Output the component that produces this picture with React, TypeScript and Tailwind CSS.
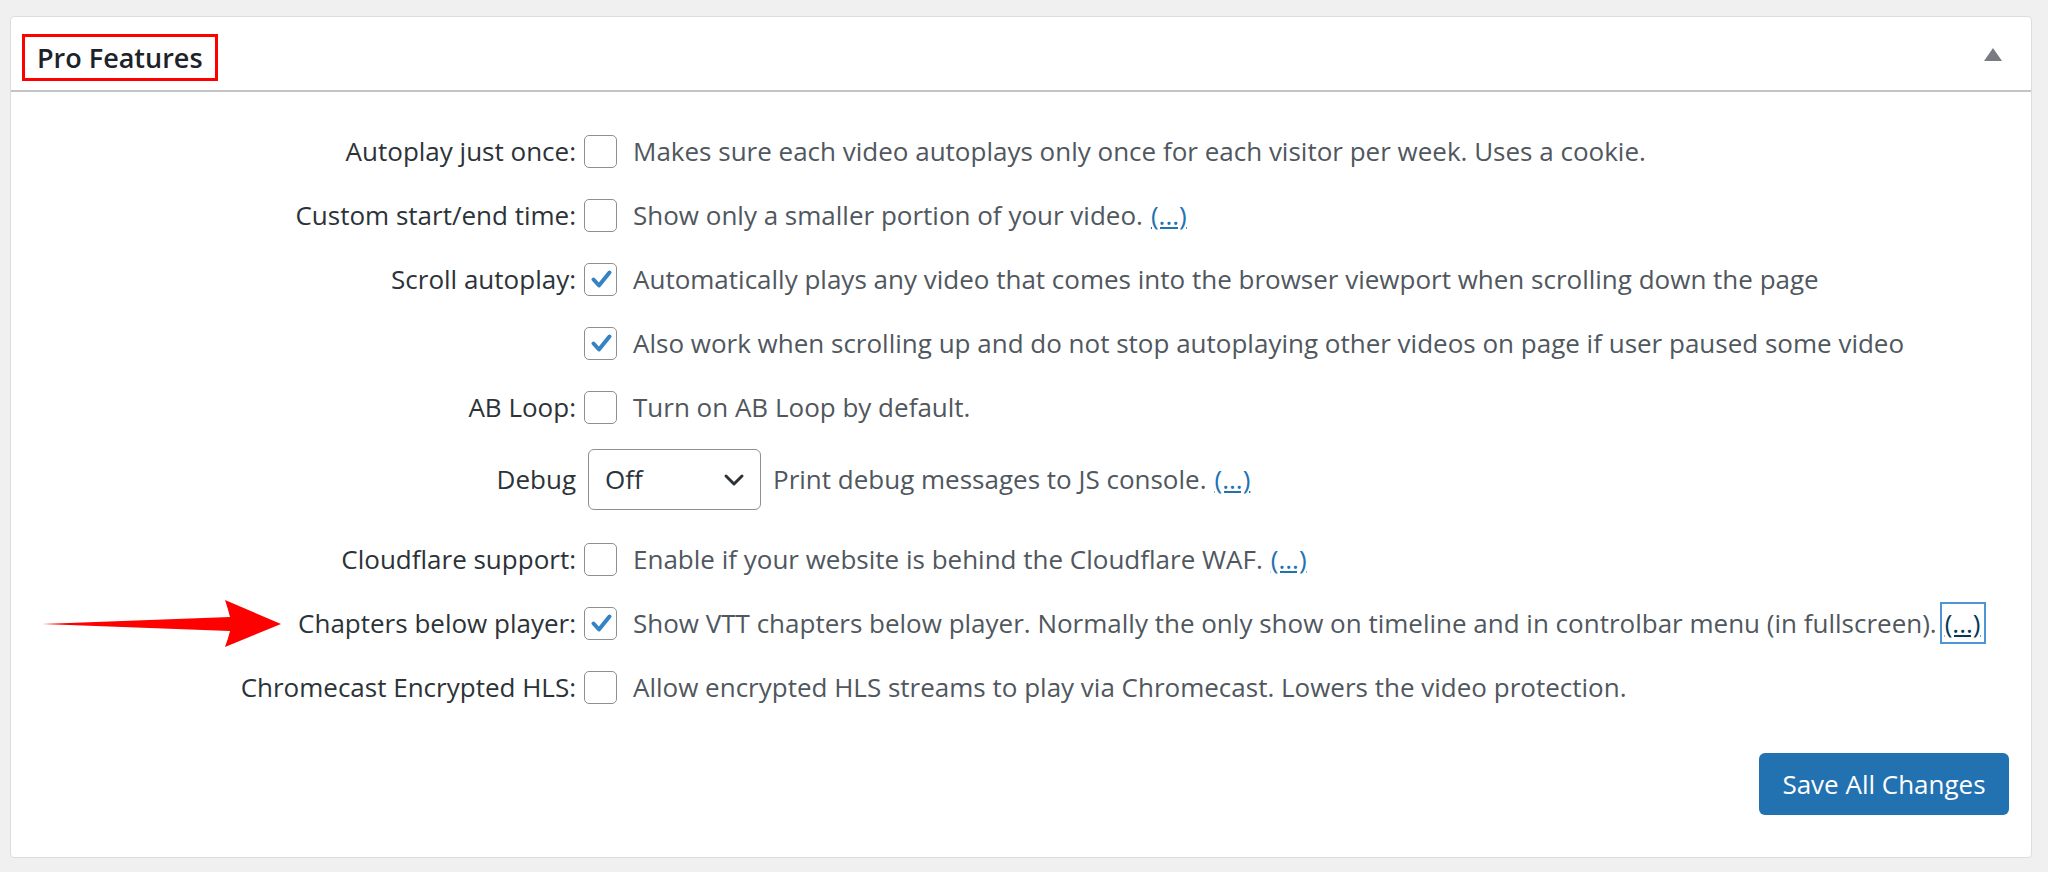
import React from "react"

type Row = {
  label: string
  checked?: boolean
  text: string
  link?: boolean
  focused?: boolean
}

const rowsTop: Row[] = [
  { label: "Autoplay just once:", text: "Makes sure each video autoplays only once for each visitor per week. Uses a cookie." },
  { label: "Custom start/end time:", text: "Show only a smaller portion of your video.", link: true },
  { label: "Scroll autoplay:", checked: true, text: "Automatically plays any video that comes into the browser viewport when scrolling down the page" },
  { label: "", checked: true, text: "Also work when scrolling up and do not stop autoplaying other videos on page if user paused some video" },
  { label: "AB Loop:", text: "Turn on AB Loop by default." },
]

const rowsBottom: Row[] = [
  { label: "Cloudflare support:", text: "Enable if your website is behind the Cloudflare WAF.", link: true },
  {
    label: "Chapters below player:",
    checked: true,
    text: "Show VTT chapters below player. Normally the only show on timeline and in controlbar menu (in fullscreen).",
    link: true,
    focused: true,
  },
  { label: "Chromecast Encrypted HLS:", text: "Allow encrypted HLS streams to play via Chromecast. Lowers the video protection." },
]

function Checkbox({ checked }: { checked?: boolean }) {
  return (
    <span className="flex h-[33px] w-[33px] shrink-0 items-center justify-center rounded-[5px] border-[1.5px] border-[#8c8f94] bg-white">
      {checked && (
        <svg width="26" height="26" viewBox="0 0 26 26">
          <path d="M5.5 13.5 L11 19.5 L21.5 6.5" fill="none" stroke="#3582c4" strokeWidth="4" strokeLinecap="round" strokeLinejoin="round" />
        </svg>
      )}
    </span>
  )
}

function MoreLink({ focused }: { focused?: boolean }) {
  if (focused) {
    return (
      <a href="#" className="ml-[6px] px-[2px] text-[#043959] underline outline outline-[2px] outline-offset-[1px] outline-[#4f94d4]">
        (...)
      </a>
    )
  }
  return (
    <a href="#" className="ml-[8px] text-[#2271b1] underline">
      (...)
    </a>
  )
}

function OptionRow({ row }: { row: Row }) {
  return (
    <div className="flex h-[64px] items-center">
      <div className="w-[565px] shrink-0 text-right text-[#2c3338]">{row.label}</div>
      <div className="ml-[8px]">
        <Checkbox checked={row.checked} />
      </div>
      <div className="ml-[16px] whitespace-nowrap text-[#50575e]">
        {row.text}
        {row.link && <MoreLink focused={row.focused} />}
      </div>
    </div>
  )
}

export default function App() {
  return (
    <div className="min-h-screen bg-[#f0f0f1] pl-[10px] pr-[16px] pt-[16px]" style={{ fontFamily: '"Open Sans", "Noto Sans", sans-serif' }}>
      <div className="relative h-[842px] rounded-[4px] border border-[#dcdcde] bg-white">
        {/* header */}
        <div className="flex h-[75px] items-start justify-between border-b-[2px] border-[#c3c4c7] pl-[11px] pr-[29px] pt-[17px]">
          <div className="flex h-[47px] items-center border-[3px] border-[#ff0000] px-[12px]">
            <h2 className="text-[27px] font-semibold leading-none text-[#1d2327]">Pro Features</h2>
          </div>
          <svg width="18" height="13" viewBox="0 0 18 13" className="mt-[14px]">
            <polygon points="9,0 18,13 0,13" fill="#787c82" />
          </svg>
        </div>

        {/* options */}
        <div className="pt-[27px] text-[26px]">
          {rowsTop.map((r, i) => (
            <OptionRow key={i} row={r} />
          ))}

          <div className="flex h-[88px] items-start pt-[10px]">
            <div className="flex h-[61px] w-[565px] shrink-0 items-center justify-end text-[#2c3338]">Debug</div>
            <div className="ml-[12px] flex h-[61px] w-[173px] items-center justify-between rounded-[6px] border-[1.5px] border-[#8c8f94] pl-[16px] pr-[15px] text-[26px] text-[#2c3338]">
              <span>Off</span>
              <svg width="22" height="14" viewBox="0 0 22 14">
                <path d="M3 3 L11 11 L19 3" fill="none" stroke="#2c3338" strokeWidth="3" strokeLinecap="round" strokeLinejoin="round" />
              </svg>
            </div>
            <div className="ml-[12px] flex h-[61px] items-center whitespace-nowrap text-[#50575e]">
              Print debug messages to JS console.
              <MoreLink />
            </div>
          </div>

          {rowsBottom.map((r, i) => (
            <OptionRow key={i} row={r} />
          ))}
        </div>

        <div className="mt-[34px] flex justify-end pr-[22px]">
          <button className="h-[62px] w-[250px] rounded-[6px] bg-[#2271b1] text-[26px] text-white">Save All Changes</button>
        </div>

        {/* annotation arrow */}
        <svg className="absolute left-[30px] top-[582px]" width="242" height="50" viewBox="0 0 242 50">
          <path d="M1 25 L189 18 Q187 10 184 1 L240 25 L184 48 Q187 40 189 32 Z" fill="#ff0000" />
        </svg>
      </div>
    </div>
  )
}
